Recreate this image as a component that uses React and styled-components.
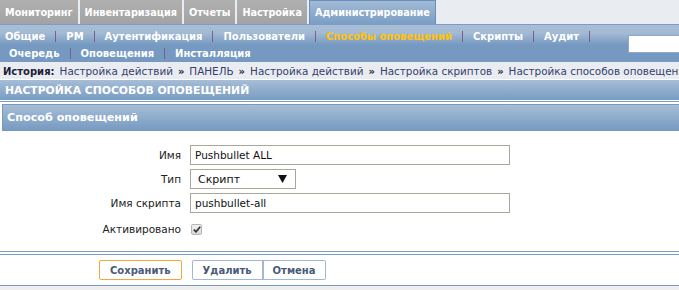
import React from 'react';
import styled, { createGlobalStyle } from 'styled-components';

const GlobalStyle = createGlobalStyle`
  html, body {
    margin: 0;
    padding: 0;
    background: #ffffff;
    font-family: "DejaVu Sans", Verdana, sans-serif;
    font-size: 11px;
    overflow: hidden;
  }
`;

const Page = styled.div`
  width: 679px;
  height: 290px;
  overflow: hidden;
  background: #ffffff;
`;

const TopTabs = styled.div`
  display: flex;
  height: 24px;
  background: #e9edf1;
`;

const Tab = styled.div`
  height: 24px;
  box-sizing: border-box;
  padding: 0 5px;
  margin-right: 2px;
  display: flex;
  align-items: center;
  font-weight: bold;
  font-size: 9.7px;
  color: #ffffff;
  white-space: nowrap;
  background: ${p => p.active
    ? 'linear-gradient(#a2bad5, #7b9ec6)'
    : 'linear-gradient(#b0b0b0, #a3a3a3)'};
  border: ${p => p.active ? '1px solid #6890be' : 'none'};
  border-bottom: none;
`;

const SubBar = styled.div`
  height: 38px;
  box-sizing: border-box;
  border-top: 1px solid #7c9cc3;
  background: linear-gradient(#a8bed6 0px, #a3bad4 8px, #7599c1 20px, #7599c1 100%);
  display: flex;
  justify-content: space-between;
`;

const SubRows = styled.div`
  display: flex;
  flex-direction: column;
  padding-top: 3px;
`;

const SubRow = styled.div`
  display: flex;
  align-items: center;
  height: 17px;
  padding-left: ${p => p.indent}px;
`;

const SubItem = styled.span`
  font-weight: bold;
  font-size: 10px;
  white-space: nowrap;
  color: ${p => p.active ? '#ffc20e' : '#ffffff'};
`;

const Sep = styled.span`
  display: inline-block;
  width: 1px;
  height: 11px;
  margin: 0 10px;
  background: #7a5e8e;
`;

const Search = styled.div`
  flex-shrink: 0;
  width: 50px;
  height: 16px;
  margin-top: 10px;
  background: #ffffff;
  border: 1px solid #8fa9c9;
  border-right: none;
`;

const Crumbs = styled.div`
  height: 17px;
  box-sizing: border-box;
  padding: 1px 0 0 3px;
  background: #e9edf1;
  color: #37406c;
  font-size: 10.4px;
  white-space: nowrap;
  display: flex;
  align-items: center;
  gap: 5px;
`;

const CrumbLabel = styled.b`
  color: #231d3a;
  font-size: 10px;
`;

const Arrow = styled.span`
  font-weight: bold;
  font-size: 10px;
  color: #231d3a;
`;

const Header = styled.div`
  margin-top: 1px;
  height: 20px;
  box-sizing: border-box;
  padding-left: 5px;
  display: flex;
  align-items: center;
  color: #ffffff;
  font-weight: bold;
  font-size: 10.8px;
  background: linear-gradient(#a6bdd6, #789cc3);
`;

const Rule = styled.div`
  height: 1px;
  background: #7b9bc1;
  margin-top: ${p => p.top || 0}px;
`;

const Panel = styled.div`
  margin: 2px 0 0 2px;
  height: 27px;
  box-sizing: border-box;
  border: 1px solid #7a98be;
  border-right: none;
  padding-left: 4px;
  display: flex;
  align-items: center;
  color: #ffffff;
  font-weight: bold;
  font-size: 11.2px;
  background: linear-gradient(#a6bdd6, #779bc2);
`;

const Form = styled.div`
  display: grid;
  grid-template-columns: 181px 1fr;
  column-gap: 9px;
  row-gap: 4px;
  padding-top: 14px;
  align-items: center;
`;

const Label = styled.div`
  text-align: right;
  color: #222222;
  font-size: 10.5px;
  white-space: nowrap;
`;

const Input = styled.div`
  width: 320px;
  height: 20px;
  box-sizing: border-box;
  border: 1px solid #a9a898;
  padding-left: 4px;
  display: flex;
  align-items: center;
  color: #111111;
  font-size: 10.5px;
`;

const Select = styled(Input)`
  width: 106px;
  padding: 0 8px 0 7px;
  justify-content: space-between;
  font-size: 11px;
`;

const Check = styled.div`
  margin: 6px 0 0 1px;
  width: 11px;
  height: 11px;
  box-sizing: border-box;
  border: 1px solid #b6b6b6;
  border-radius: 2px;
  background: linear-gradient(#f2f2f2, #d8d8d8);
  display: flex;
  align-items: center;
  justify-content: center;
`;

const CheckLabel = styled(Label)`
  margin-top: 6px;
`;

const Footer = styled.div`
  margin-top: 16px;
`;

const Buttons = styled.div`
  display: flex;
  align-items: center;
  padding: 5px 0 5px 99px;
`;

const Btn = styled.div`
  height: 20px;
  box-sizing: border-box;
  padding: 0 ${p => p.pad}px;
  display: flex;
  align-items: center;
  font-weight: bold;
  font-size: 10px;
  color: #4a5a78;
  background: #ffffff;
  border: 1px solid ${p => p.main ? '#f4a53c' : '#a4b7cf'};
  border-radius: 2px;
  margin-right: ${p => p.gap || 0}px;
`;

const Group = styled.div`
  display: flex;
  & > div:first-child { border-radius: 2px 0 0 2px; border-right-width: 2px; }
  & > div:last-child { border-radius: 0 2px 2px 0; border-left: none; }
`;

const Bottom = styled.div`
  border-top: 1px solid #7b9bc1;
  height: 10px;
  background: #eeeeee;
`;

export default function App() {
  return (
    <Page>
      <GlobalStyle />
      <TopTabs>
        <Tab>Мониторинг</Tab>
        <Tab>Инвентаризация</Tab>
        <Tab>Отчеты</Tab>
        <Tab>Настройка</Tab>
        <Tab active>Администрирование</Tab>
      </TopTabs>
      <SubBar>
        <SubRows>
          <SubRow indent={5}>
            <SubItem>Общие</SubItem><Sep />
            <SubItem>PM</SubItem><Sep />
            <SubItem>Аутентификация</SubItem><Sep />
            <SubItem>Пользователи</SubItem><Sep />
            <SubItem active>Способы оповещений</SubItem><Sep />
            <SubItem>Скрипты</SubItem><Sep />
            <SubItem>Аудит</SubItem><Sep />
          </SubRow>
          <SubRow indent={9}>
            <SubItem>Очередь</SubItem><Sep />
            <SubItem>Оповещения</SubItem><Sep />
            <SubItem>Инсталляция</SubItem>
          </SubRow>
        </SubRows>
        <Search />
      </SubBar>
      <Crumbs>
        <CrumbLabel>История:</CrumbLabel>
        <span>Настройка действий</span><Arrow>»</Arrow>
        <span>ПАНЕЛЬ</span><Arrow>»</Arrow>
        <span>Настройка действий</span><Arrow>»</Arrow>
        <span>Настройка скриптов</span><Arrow>»</Arrow>
        <span>Настройка способов оповещений</span>
      </Crumbs>
      <Header>НАСТРОЙКА СПОСОБОВ ОПОВЕЩЕНИЙ</Header>
      <Rule top={1} />
      <Panel>Способ оповещений</Panel>
      <Form>
        <Label>Имя</Label>
        <Input>Pushbullet ALL</Input>
        <Label>Тип</Label>
        <Select>
          <span>Скрипт</span>
          <svg width="9" height="8" viewBox="0 0 9 8"><path d="M0 0H9L4.5 8Z" fill="#111" /></svg>
        </Select>
        <Label>Имя скрипта</Label>
        <Input>pushbullet-all</Input>
        <CheckLabel>Активировано</CheckLabel>
        <div>
          <Check>
            <svg width="8" height="7" viewBox="0 0 8 7"><path d="M0.8 3.6L3 5.8L7.2 0.8" stroke="#333" strokeWidth="1.7" fill="none" /></svg>
          </Check>
        </div>
      </Form>
      <Footer>
        <Rule />
        <Rule top={2} />
        <Buttons>
          <Btn main pad={10} gap={10}>Сохранить</Btn>
          <Group>
            <Btn pad={10}>Удалить</Btn>
            <Btn pad={9}>Отмена</Btn>
          </Group>
        </Buttons>
        <Bottom />
      </Footer>
    </Page>
  );
}
